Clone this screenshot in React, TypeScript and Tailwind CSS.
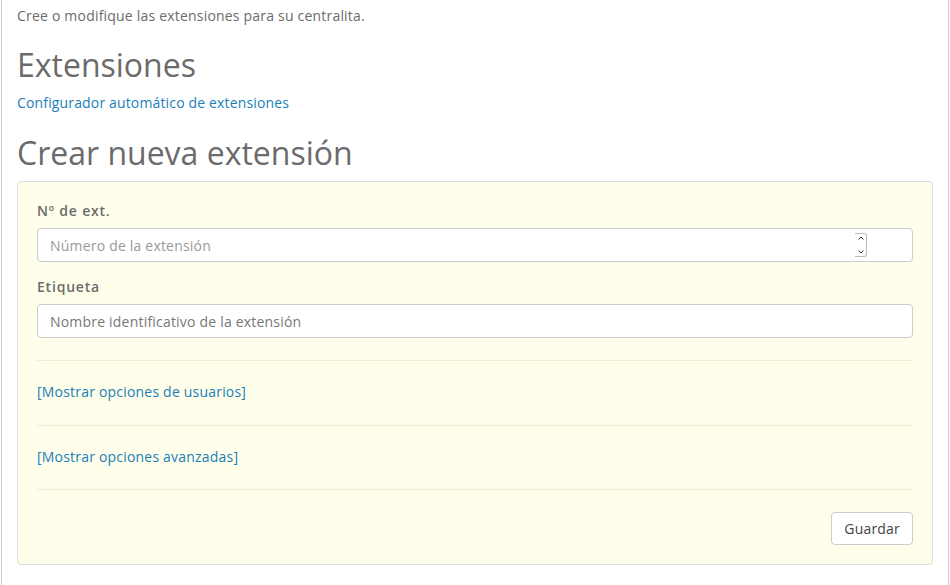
export default function App() {
  return (
    <div className="min-h-[585px] bg-white" style={{ fontFamily: '"Open Sans", "Liberation Sans", sans-serif' }}>
      <div className="ml-[1px] mr-[1px] min-h-[585px] border-x border-[#cccccc] px-[15px] pt-[6px]">
        <p className="text-[14px] leading-5 tracking-[0.2px] text-[#6b6b6b]">
          Cree o modifique las extensiones para su centralita.
        </p>

        <h1 className="mt-[20px] text-[32px] leading-[38px] text-[#6b6b6b]">Extensiones</h1>
        <a href="#" className="mt-[9px] block text-[14px] leading-5 tracking-[0.15px] text-[#1a7fb8]">
          Configurador automático de extensiones
        </a>

        <h2 className="mt-[21px] text-[32px] leading-[38px] text-[#6b6b6b]">Crear nueva extensión</h2>

        <div className="mt-[9px] rounded border border-[#dddddd] bg-[#fefeea] px-[19px] pt-[19px] pb-[19px]">
          <label className="block text-[14px] font-semibold leading-5 tracking-[0.8px] text-[#6b6b6b]">Nº de ext.</label>
          <div className="relative mt-[7px]">
            <input
              type="text"
              placeholder="Número de la extensión"
              className="block h-[34px] w-full rounded border border-[#cccccc] bg-white px-3 text-[14px] tracking-[0.2px] text-[#555] placeholder:text-[#999999] outline-none"
            />
            <div className="absolute top-[5px] right-[46px] flex h-[24px] w-[12px] flex-col items-center justify-between rounded-r-[3px] border border-l-0 border-[#bbbbbb] py-[1px]">
              <svg width="8" height="6" viewBox="0 0 8 6">
                <path d="M1.5 4.5 L4 2 L6.5 4.5" fill="none" stroke="#333" strokeWidth="1" />
              </svg>
              <svg width="8" height="6" viewBox="0 0 8 6">
                <path d="M1.5 1.5 L4 4 L6.5 1.5" fill="none" stroke="#333" strokeWidth="1" />
              </svg>
            </div>
          </div>

          <label className="mt-[15px] block text-[14px] font-semibold leading-5 tracking-[0.8px] text-[#6b6b6b]">Etiqueta</label>
          <input
            type="text"
            placeholder="Nombre identificativo de la extensión"
            className="mt-[7px] block h-[34px] w-full rounded border border-[#cccccc] bg-white px-3 text-[14px] tracking-[0.2px] text-[#555] placeholder:text-[#777777] outline-none"
          />

          <div className="mt-[22px] border-t border-[#eeeed8]" />
          <a href="#" className="block pt-[21px] pb-[23px] text-[14px] leading-5 tracking-[0.2px] text-[#1a7fb8]">
            [Mostrar opciones de usuarios]
          </a>
          <div className="border-t border-[#eeeed8]" />
          <a href="#" className="block pt-[21px] pb-[22px] text-[14px] leading-5 tracking-[0.2px] text-[#1a7fb8]">
            [Mostrar opciones avanzadas]
          </a>
          <div className="border-t border-[#eeeed8]" />

          <div className="mt-[22px] flex justify-end">
            <button className="h-[33px] rounded border border-[#cccccc] bg-white px-3 text-[14px] tracking-[0.2px] text-[#444444]">
              Guardar
            </button>
          </div>
        </div>
      </div>
    </div>
  );
}
